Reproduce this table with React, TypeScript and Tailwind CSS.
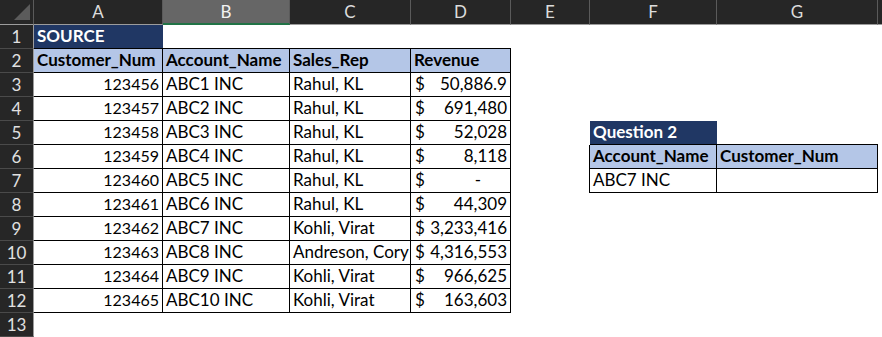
const cols = ["A", "B", "C", "D", "E", "F", "G", ""];

const bd = "border-r border-b border-black";
const hdr = "bg-[#b4c6e7] font-bold";
const navy = "bg-[#203764] text-white font-bold";

type Cell = { t?: string; c?: string; money?: [string, string] };

const source: [string, string, string, string][] = [
  ["123456", "ABC1 INC", "Rahul, KL", "50,886.9"],
  ["123457", "ABC2 INC", "Rahul, KL", "691,480"],
  ["123458", "ABC3 INC", "Rahul, KL", "52,028"],
  ["123459", "ABC4 INC", "Rahul, KL", "8,118"],
  ["123460", "ABC5 INC", "Rahul, KL", "-"],
  ["123461", "ABC6 INC", "Rahul, KL", "44,309"],
  ["123462", "ABC7 INC", "Kohli, Virat", "3,233,416"],
  ["123463", "ABC8 INC", "Andreson, Cory", "4,316,553"],
  ["123464", "ABC9 INC", "Kohli, Virat", "966,625"],
  ["123465", "ABC10 INC", "Kohli, Virat", "163,603"],
];

function buildRows(): Cell[][] {
  const rows: Cell[][] = [];
  rows.push([
    { t: "SOURCE", c: `${navy} border-b border-black` },
    { c: "border-b border-black" },
    { c: "border-b border-black" },
    { c: "border-b border-black" },
    {}, {}, {}, {},
  ]);
  rows.push([
    { t: "Customer_Num", c: `${hdr} ${bd}` },
    { t: "Account_Name", c: `${hdr} ${bd}` },
    { t: "Sales_Rep", c: `${hdr} ${bd}` },
    { t: "Revenue", c: `${hdr} ${bd}` },
    {}, {}, {}, {},
  ]);
  source.forEach((r, i) => {
    const row: Cell[] = [
      { t: r[0], c: `${bd} justify-end text-[16px]` },
      { t: r[1], c: bd },
      { t: r[2], c: bd },
      { money: ["$", r[3]], c: bd },
      {}, {}, {}, {},
    ];
    const n = i + 3;
    if (n === 5) {
      row[5] = { t: "Question 2", c: `${navy} border-b border-black` };
      row[6] = { c: "border-b border-black" };
    }
    if (n === 6) {
      row[4] = { c: "border-r border-black" };
      row[5] = { t: "Account_Name", c: `${hdr} ${bd}` };
      row[6] = { t: "Customer_Num", c: `${hdr} ${bd}` };
    }
    if (n === 7) {
      row[4] = { c: "border-r border-black" };
      row[5] = { t: "ABC7 INC", c: bd };
      row[6] = { c: bd };
    }
    rows.push(row);
  });
  rows.push([{}, {}, {}, {}, {}, {}, {}, {}]);
  return rows;
}

function Money({ v }: { v: [string, string] }) {
  const dash = v[1] === "-";
  return (
    <div className="flex w-full justify-between pl-[1px]">
      <span>{v[0]}</span>
      <span className={dash ? "pr-[26px]" : ""}>{v[1]}</span>
    </div>
  );
}

export default function App() {
  const rows = buildRows();
  return (
    <div className="h-[337px] w-[882px] overflow-hidden bg-white font-['Lato',sans-serif] text-[17px] text-black">
      <div className="grid grid-cols-[34px_129px_127px_121px_100px_79px_127px_161px_1fr]">
        <div className="relative h-[25px] border-r border-b border-r-[#5a5a5a] border-b-[#9c9c9c] bg-[#262626]">
          <svg className="absolute left-[14px] top-[4px]" width="16" height="16" viewBox="0 0 16 16">
            <polygon points="16,0 16,16 0,16" fill="#5b5b5b" />
          </svg>
        </div>
        {cols.map((c) =>
          c === "B" ? (
            <div
              key="B"
              className="flex h-[25px] items-center justify-center border-r border-b-2 border-r-[#5a5a5a] border-b-[#217346] bg-[#666666] text-[17px] text-[#f2f2f2]"
            >
              {c}
            </div>
          ) : (
            <div
              key={c || "H"}
              className="flex h-[25px] items-center justify-center border-r border-b border-r-[#5a5a5a] border-b-[#9c9c9c] bg-[#262626] text-[17px] text-[#dcdcdc]"
            >
              {c}
            </div>
          )
        )}
        {rows.map((row, i) => (
          <Row key={i} n={i + 1} row={row} />
        ))}
      </div>
    </div>
  );
}

function Row({ n, row }: { n: number; row: Cell[] }) {
  return (
    <>
      <div className="flex h-[24px] items-center justify-center border-r border-b border-r-[#9c9c9c] border-b-[#4a4a4a] bg-[#262626] text-[17px] text-[#e0e0e0]">
        {n}
      </div>
      {row.map((cell, j) => (
        <div
          key={j}
          className={`flex h-[24px] items-end overflow-visible whitespace-nowrap px-[3px] pb-[1px] leading-[22px] ${cell.c ?? ""}`}
        >
          {cell.money ? <Money v={cell.money} /> : cell.t}
        </div>
      ))}
    </>
  );
}
